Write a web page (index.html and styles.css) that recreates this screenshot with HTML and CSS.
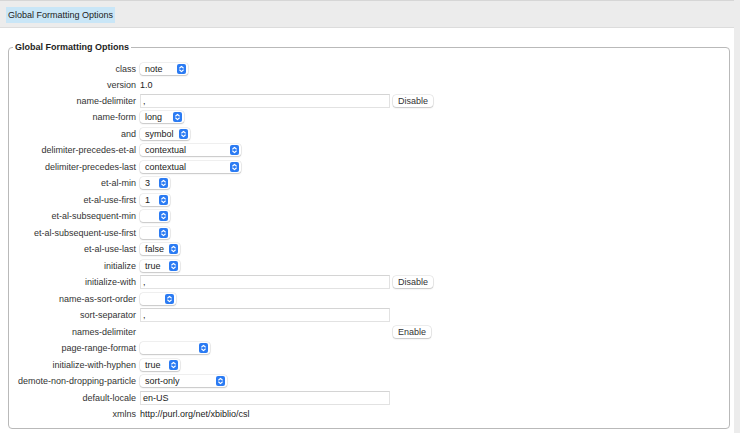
FILE: index.html
```html
<!DOCTYPE html>
<html lang="en">
  <head>
    <meta charset="UTF-8" />
    <title>Global Formatting Options</title>
    <link rel="stylesheet" href="styles.css">
  </head>
  <body>
    <svg width="0" height="0" class="defs">
      <symbol id="stepper" viewBox="0 0 9 10">
        <rect x="0" y="0" width="9" height="10" rx="2" fill="#2b7bf3" />
        <path d="M2.7 4 L4.5 2.3 L6.3 4 M2.7 6 L4.5 7.7 L6.3 6" fill="none" stroke="#fff" stroke-width="1.1" stroke-linecap="round" stroke-linejoin="round" />
      </symbol>
    </svg>
    <div class="page">
      <div class="tabbar">
        <span class="tabbar__title">Global Formatting Options</span>
      </div>

      <fieldset class="options">
        <legend class="options__legend">Global Formatting Options</legend>

        <div class="row">
          <span class="row__label">class</span>
          <span class="select w-48">note<svg class="select__icon"><use href="#stepper" /></svg></span>
        </div>
        <div class="row row--short">
          <span class="row__label">version</span>
          <span class="row__value">1.0</span>
        </div>
        <div class="row">
          <span class="row__label">name-delimiter</span>
          <span class="text-input">,</span>
          <span class="btn">Disable</span>
        </div>
        <div class="row">
          <span class="row__label">name-form</span>
          <span class="select w-44">long<svg class="select__icon"><use href="#stepper" /></svg></span>
        </div>
        <div class="row">
          <span class="row__label">and</span>
          <span class="select w-50">symbol<svg class="select__icon"><use href="#stepper" /></svg></span>
        </div>
        <div class="row">
          <span class="row__label">delimiter-precedes-et-al</span>
          <span class="select w-101">contextual<svg class="select__icon"><use href="#stepper" /></svg></span>
        </div>
        <div class="row">
          <span class="row__label">delimiter-precedes-last</span>
          <span class="select w-101">contextual<svg class="select__icon"><use href="#stepper" /></svg></span>
        </div>
        <div class="row">
          <span class="row__label">et-al-min</span>
          <span class="select w-30">3<svg class="select__icon"><use href="#stepper" /></svg></span>
        </div>
        <div class="row">
          <span class="row__label">et-al-use-first</span>
          <span class="select w-30">1<svg class="select__icon"><use href="#stepper" /></svg></span>
        </div>
        <div class="row">
          <span class="row__label">et-al-subsequent-min</span>
          <span class="select w-30"><svg class="select__icon"><use href="#stepper" /></svg></span>
        </div>
        <div class="row">
          <span class="row__label">et-al-subsequent-use-first</span>
          <span class="select w-30"><svg class="select__icon"><use href="#stepper" /></svg></span>
        </div>
        <div class="row">
          <span class="row__label">et-al-use-last</span>
          <span class="select w-40">false<svg class="select__icon"><use href="#stepper" /></svg></span>
        </div>
        <div class="row">
          <span class="row__label">initialize</span>
          <span class="select w-40">true<svg class="select__icon"><use href="#stepper" /></svg></span>
        </div>
        <div class="row">
          <span class="row__label">initialize-with</span>
          <span class="text-input">,</span>
          <span class="btn">Disable</span>
        </div>
        <div class="row">
          <span class="row__label">name-as-sort-order</span>
          <span class="select w-36"><svg class="select__icon"><use href="#stepper" /></svg></span>
        </div>
        <div class="row">
          <span class="row__label">sort-separator</span>
          <span class="text-input">,</span>
        </div>
        <div class="row">
          <span class="row__label">names-delimiter</span>
          <span class="text-input text-input--hidden"></span>
          <span class="btn">Enable</span>
        </div>
        <div class="row">
          <span class="row__label">page-range-format</span>
          <span class="select w-70"><svg class="select__icon"><use href="#stepper" /></svg></span>
        </div>
        <div class="row">
          <span class="row__label">initialize-with-hyphen</span>
          <span class="select w-40">true<svg class="select__icon"><use href="#stepper" /></svg></span>
        </div>
        <div class="row">
          <span class="row__label">demote-non-dropping-particle</span>
          <span class="select w-87">sort-only<svg class="select__icon"><use href="#stepper" /></svg></span>
        </div>
        <div class="row">
          <span class="row__label">default-locale</span>
          <span class="text-input">en-US</span>
        </div>
        <div class="row">
          <span class="row__label">xmlns</span>
          <span class="row__value">http://purl.org/net/xbiblio/csl</span>
        </div>
      </fieldset>
    </div>
  </body>
</html>
```

FILE: styles.css
```css
html,
body {
  margin: 0;
  padding: 0;
}

body {
  background-color: #ececec;
  font-family: "Liberation Sans", Arial, sans-serif;
  font-size: 9px;
  color: #1d1d1d;
}

.defs {
  position: absolute;
}

.page {
  width: 734px;
  height: 433px;
  background-color: #ffffff;
  overflow: hidden;
}

.tabbar {
  height: 28px;
  display: flex;
  align-items: center;
  padding-left: 6px;
  padding-top: 2px;
  box-sizing: border-box;
  background-color: #ececec;
  border-top: 1px solid #d6d6d6;
  border-bottom: 1px solid #dcdcdc;
}

.tabbar__title {
  background-color: #c9e6f7;
  padding: 3px 2px;
  font-size: 9px;
  color: #222;
}

.options {
  margin: 14px 4px 0 8px;
  padding: 9px 0 5px 0;
  border: 1px solid #b9b9b9;
  border-radius: 4px;
}

.options__legend {
  margin-left: 4px;
  padding: 0 2px;
  font-weight: bold;
  font-size: 9px;
  color: #1d1d1d;
}

.row {
  display: flex;
  align-items: center;
  height: 16.5px;
}

.row--short {
  height: 15px;
}

.row__label {
  width: 127px;
  text-align: right;
  margin-right: 4px;
  color: #333;
  white-space: nowrap;
}

.row__value {
  color: #222;
}

.select {
  position: relative;
  display: flex;
  align-items: center;
  height: 12px;
  padding-left: 5px;
  box-sizing: border-box;
  background-color: #fff;
  border-radius: 3px;
  box-shadow: 0 0 0 0.5px rgba(0, 0, 0, 0.12), 0 1px 1.5px rgba(0, 0, 0, 0.18);
  color: #222;
}

.select__icon {
  position: absolute;
  right: 2px;
  top: 1px;
  width: 9px;
  height: 10px;
}

.w-30 { width: 30px; }
.w-36 { width: 36px; }
.w-40 { width: 40px; }
.w-44 { width: 44px; }
.w-48 { width: 48px; }
.w-50 { width: 50px; }
.w-70 { width: 70px; }
.w-87 { width: 87px; }
.w-101 { width: 101px; }

.text-input {
  display: flex;
  align-items: center;
  width: 250px;
  height: 14px;
  box-sizing: border-box;
  padding-left: 2px;
  border: 1px solid #e2e2e2;
  border-top-color: #d4d4d4;
  background-color: #fff;
  color: #222;
}

.text-input--hidden {
  visibility: hidden;
}

.btn {
  margin-left: 3px;
  height: 12px;
  padding: 0 5px;
  display: flex;
  align-items: center;
  background-color: #fff;
  border-radius: 3px;
  box-shadow: 0 0 0 0.5px rgba(0, 0, 0, 0.14), 0 1px 1.5px rgba(0, 0, 0, 0.16);
  color: #333;
}
```
